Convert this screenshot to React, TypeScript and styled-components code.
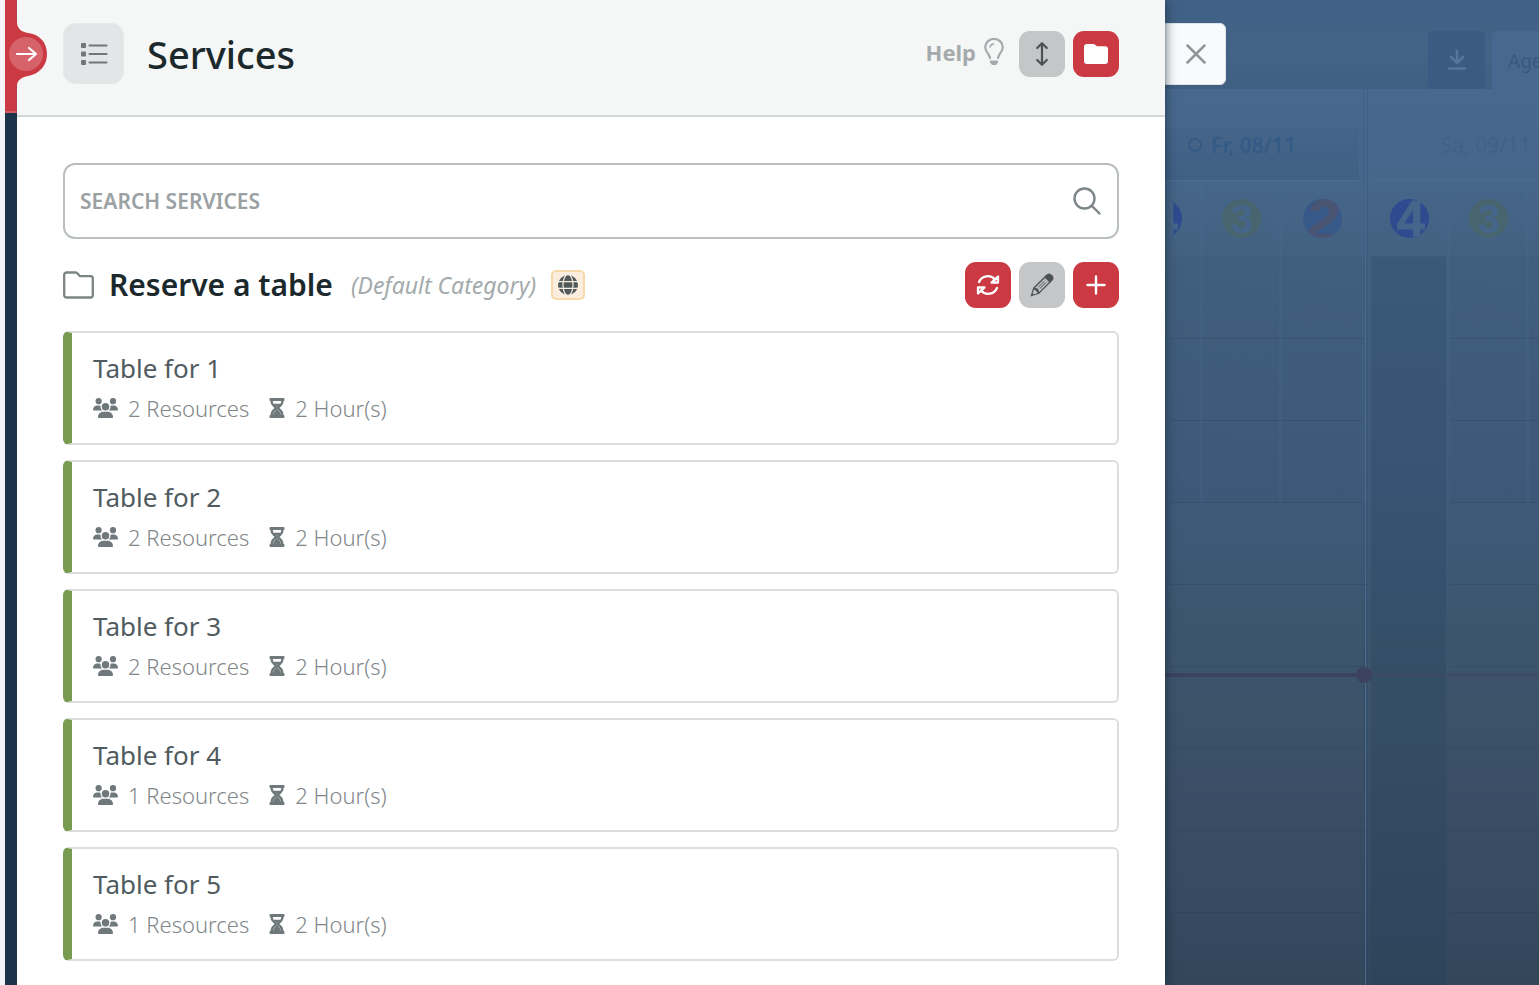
import React from "react";
import styled, { createGlobalStyle, css } from "styled-components";

const GlobalStyle = createGlobalStyle`
  *, *::before, *::after { box-sizing: border-box; }
  body {
    margin: 0;
    background: #f5f5f7;
    font-family: "Noto Sans", "Open Sans", sans-serif;
    color: #1b282c;
  }
  button, input { font: inherit; color: inherit; }
  button { padding: 0; border: 0; cursor: pointer; }
  h1, h2, h3, p, ul { margin: 0; padding: 0; }
  svg { display: block; flex: none; }
`;

/* ---------- Shell ---------- */

const Shell = styled.div`
  display: grid;
  grid-template-columns: 12px minmax(0, 1fr) 374px;
  height: 100vh;
  padding-left: 5px;
  overflow: hidden;
`;

const Rail = styled.nav`
  position: relative;
  z-index: 3;
  display: flex;
  flex-direction: column;
  background: #1d3349;
`;

const RailHead = styled.div`
  height: 113px;
  background: #cb3942;
  border-right: 1px solid #b0434c;
  border-bottom: 2px solid #cf5c65;
`;

const RailToggle = styled.button`
  position: absolute;
  top: 22px;
  left: 0;
  background: none;
`;

const Panel = styled.main`
  position: relative;
  z-index: 2;
  overflow-y: auto;
  background: #fff;
  box-shadow: 1px 0 10px rgba(20, 35, 50, 0.6);
`;

/* ---------- Panel header ---------- */

const PanelHeader = styled.header`
  display: flex;
  align-items: center;
  padding: 23px 46px 31px;
  background: #f5f7f6;
  border-bottom: 2px solid #d3d7d7;
`;

const ListBadge = styled.span`
  display: grid;
  place-items: center;
  width: 61px;
  height: 61px;
  margin-right: 23px;
  border: 1px solid #e8e9eb;
  border-radius: 12px;
  background: #e4e5e7;
`;

const Title = styled.h1`
  flex: 1;
  font-size: 38px;
  font-weight: 500;
  line-height: 60px;
`;

const HelpLink = styled.a`
  display: flex;
  align-items: center;
  gap: 8px;
  margin-right: 15px;
  padding-bottom: 4px;
  color: #a5abad;
  font-size: 22px;
  font-weight: 700;
  line-height: 30px;
  text-decoration: none;
`;

const Actions = styled.div`
  display: flex;
  gap: 8px;
`;

const IconButton = styled.button<{ $tone: "red" | "gray" }>`
  display: grid;
  place-items: center;
  width: 46px;
  height: 46px;
  border-radius: 11px;
  ${({ $tone }) =>
    $tone === "red"
      ? css`background: #cb3942; color: #fff;`
      : css`background: #c4c6c8; color: #4b5254;`}
`;

/* ---------- Panel content ---------- */

const Content = styled.div`
  display: flex;
  flex-direction: column;
  gap: 23px;
  padding: 46px 46px 20px;
`;

const SearchBox = styled.label`
  display: flex;
  align-items: center;
  height: 76px;
  padding: 0 16px 0 15px;
  border: 2px solid #b9bfc1;
  border-radius: 12px;
  color: #7d8688;
`;

const SearchInput = styled.input`
  flex: 1;
  min-width: 0;
  padding: 0;
  border: 0;
  outline: 0;
  background: none;
  font-size: 21px;
  font-weight: 600;
  &::placeholder {
    color: #9ba1a3;
    opacity: 1;
    text-transform: uppercase;
  }
`;

const CategoryRow = styled.div`
  display: flex;
  align-items: center;
`;

const CategoryName = styled.h2`
  margin: 0 18px 0 15px;
  font-size: 30px;
  font-weight: 600;
  line-height: 40px;
`;

const CategoryNote = styled.em`
  color: #a3aaac;
  font-size: 23px;
  line-height: 40px;
`;

const PublicBadge = styled.span`
  display: grid;
  place-items: center;
  width: 34px;
  height: 30px;
  margin: 0 auto 0 15px;
  border: 2px solid #f6d9a8;
  border-radius: 5px;
  background: #fbeedf;
  color: #4f595c;
`;

const ServiceList = styled.ul`
  display: flex;
  flex-direction: column;
  gap: 15px;
  list-style: none;
`;

const ServiceCard = styled.li`
  display: flex;
  flex-direction: column;
  gap: 4px;
  height: 114px;
  padding: 17px 21px 0;
  border: 2px solid #dcdede;
  border-left: 9px solid #789b52;
  border-radius: 6px;
`;

const ServiceName = styled.h3`
  color: #505b5f;
  font-size: 26px;
  font-weight: 400;
  line-height: 36px;
`;

const Meta = styled.p`
  display: flex;
  align-items: center;
  color: #7f8789;
  font-size: 22px;
  font-weight: 300;
  line-height: 36px;
`;

const MetaItem = styled.span`
  display: flex;
  align-items: center;
  gap: 10px;
  margin-right: 20px;
`;

/* ---------- Calendar behind the panel ---------- */

const Calendar = styled.aside`
  position: relative;
  display: flex;
  flex-direction: column;
  overflow: hidden;
  background: linear-gradient(
    #48698f 90px, #46668a 180px, #42607f 270px, #3f5b7b 480px,
    #3c566f 620px, #3c5269 720px, #384c64 850px, #33475b 100%
  );
`;

const CloseButton = styled.button`
  position: absolute;
  top: 23px;
  left: 0;
  z-index: 1;
  display: grid;
  place-items: center;
  width: 61px;
  height: 62px;
  border: 1px solid #dde4ec;
  border-radius: 0 6px 6px 0;
  background: #f9fafc;
  color: #909699;
`;

const ViewBar = styled.div`
  display: flex;
  flex: none;
  justify-content: flex-end;
  align-items: flex-end;
  gap: 7px;
  height: 89px;
  overflow: hidden;
  background: linear-gradient(#406186, #436486 60%, #3f5f83);
`;

const DownloadTab = styled.button`
  display: grid;
  place-items: center;
  width: 57px;
  height: 58px;
  border-radius: 6px 6px 0 0;
  background: #3a5b82;
  color: #56769a;
`;

const ViewTab = styled.button`
  width: 47px;
  height: 58px;
  padding: 2px 0 0 16px;
  overflow: hidden;
  border-radius: 6px 0 0 0;
  background: #48698f;
  color: #38587d;
  font-size: 19px;
  text-align: left;
`;

const Days = styled.div`
  display: grid;
  flex: 1;
  grid-template-columns: 240px 242px;
  min-height: 0;
  margin-left: -40px;
`;

const Day = styled.section`
  display: flex;
  flex-direction: column;
  min-width: 0;
  & + & {
    padding-left: 5px;
    border-left: 1px solid #4b6b8e;
    box-shadow: -2px 0 0 rgba(30, 60, 95, 0.12), inset 2px 0 0 rgba(30, 60, 95, 0.12);
  }
`;

const DayTitle = styled.h2<{ $today?: boolean }>`
  display: flex;
  flex: none;
  align-items: center;
  justify-content: center;
  gap: 9px;
  height: 92px;
  margin-right: 6px;
  padding-top: 20px;
  border-bottom: 1px solid rgba(90, 125, 160, 0.3);
  color: ${({ $today }) => ($today ? "#345b86" : "#40618a")};
  font-size: 21px;
  font-weight: ${({ $today }) => ($today ? 600 : 400)};
  line-height: 28px;
  white-space: nowrap;
  ${({ $today }) =>
    $today &&
    css`background: linear-gradient(transparent 38px, rgba(40, 70, 105, 0.08) 38px, rgba(40, 70, 105, 0.2));`}
`;

const TodayDot = styled.span`
  width: 14px;
  height: 14px;
  border: 2px solid #345b86;
  border-radius: 50%;
`;

const Columns = styled.div<{ $widths: string; $clipped?: boolean }>`
  display: grid;
  flex: 1;
  grid-template-columns: ${({ $widths }) => $widths};
  ${({ $clipped }) => $clipped && css`clip-path: inset(0 0 0 46px);`}
`;

const Column = styled.div`
  min-width: 0;
`;

const columnEdge = css`
  border-right: 3px solid rgba(75, 107, 145, 0.25);
`;

const Resource = styled.div`
  display: flex;
  align-items: center;
  justify-content: center;
  height: 76px;
  ${columnEdge}
  border-bottom: 1px solid rgba(40, 65, 95, 0.15);
`;

const Slots = styled.div<{ $busy?: boolean }>`
  margin-right: ${({ $busy }) => ($busy ? "4px" : "0")};
  background: ${({ $busy }) => ($busy ? "rgba(32, 60, 90, 0.22)" : "none")};
`;

const Slot = styled.div<{ $closed?: boolean; $busy?: boolean }>`
  height: 82px;
  border-bottom: 1px solid ${({ $busy }) => ($busy ? "transparent" : "rgba(30, 50, 75, 0.2)")};
  ${({ $closed }) =>
    $closed &&
    css`
      ${columnEdge}
      background: repeating-linear-gradient(45deg, rgba(30, 55, 80, 0.05) 0 6px, rgba(30, 55, 80, 0.08) 6px 7px);
    `}
`;

const NowLine = styled.div`
  position: absolute;
  top: 673px;
  left: 0;
  width: 100%;
  height: 4px;
  background: linear-gradient(90deg, #3c4260 200px, rgba(64, 66, 100, 0.35) 200px);
`;

const NowDot = styled.span`
  position: absolute;
  top: -6px;
  left: 191px;
  width: 16px;
  height: 16px;
  border-radius: 50%;
  background: #3c4260;
`;

/* ---------- Icons ---------- */

const RailBump = () => (
  <svg width="42" height="64" viewBox="0 0 42 64">
    <path fill="#cb3942" d="M0 0H12C12 7 17 10 23 11C34 12 42 20 42 32C42 44 34 52 23 54C17 55 12 58 12 64H0Z" />
    <circle cx="21" cy="32" r="17" fill="#d6626a" />
    <path d="M12 32H31M24 26L31 32L24 38" fill="none" stroke="#fff" strokeWidth="2.2" strokeLinecap="round" strokeLinejoin="round" />
  </svg>
);

const ListIcon = () => (
  <svg width="28" height="24" viewBox="0 0 28 24" fill="#6f7779">
    {[1, 9.5, 18].map((y) => (
      <React.Fragment key={y}>
        <rect x="1" y={y} width="5" height="5" rx="1" />
        <rect x="8.5" y={y + 1.5} width="19" height="2" rx="1" />
      </React.Fragment>
    ))}
  </svg>
);

const BulbIcon = () => (
  <svg width="20" height="28" viewBox="0 0 20 28" fill="none" stroke="#a5abad" strokeWidth="2.2" strokeLinecap="round">
    <path d="M6 20C5.5 16 1.2 14 1.2 9A8.8 8 0 0 1 18.8 9C18.8 14 14.5 16 14 20" />
    <path d="M6 9A4 4 0 0 1 9.5 6" strokeWidth="1.6" />
    <path d="M6 22.5H14V24.5L12 27H8L6 24.5Z" fill="#a5abad" stroke="none" />
  </svg>
);

const SortIcon = () => (
  <svg width="14" height="26" viewBox="0 0 14 26" fill="none" stroke="currentColor" strokeWidth="2.2" strokeLinecap="round" strokeLinejoin="round">
    <path d="M7 2.5V23.5M2.2 7L7 2.2L11.8 7M2.2 19L7 23.8L11.8 19" />
  </svg>
);

const FolderSolid = () => (
  <svg width="24" height="22" viewBox="0 0 24 22">
    <path fill="#fff" d="M3 1H9C10 1 11 1.4 11.7 2.2L13 3.3H21A3 3 0 0 1 24 6.3V18A3 3 0 0 1 21 21H3A3 3 0 0 1 0 18V4A3 3 0 0 1 3 1Z" />
  </svg>
);

const FolderOutline = () => (
  <svg width="31" height="28" viewBox="0 0 31 28">
    <path fill="none" stroke="#7d8486" strokeWidth="2.3" strokeLinejoin="round" d="M3.700 1.500H12.500Q13.500 1.500 14.300 2.300L17 5.200H27.500Q29.800 5.200 29.800 7.500V24Q29.800 26.500 27.500 26.500H3.700Q1.200 26.500 1.200 24V4Q1.200 1.500 3.700 1.500Z" />
  </svg>
);

const SearchIcon = () => (
  <svg width="28" height="28" viewBox="0 0 28 28" fill="none" stroke="#7d8688" strokeWidth="2.4" strokeLinecap="round">
    <circle cx="11.5" cy="11.5" r="10" />
    <path d="M18.8 18.8L26.5 26.5" />
  </svg>
);

const GlobeIcon = () => (
  <svg width="20" height="20" viewBox="0 0 20 20">
    <circle cx="10" cy="10" r="10" fill="currentColor" />
    <g fill="none" stroke="#fbeedf" strokeWidth="1.2">
      <path d="M0 6.6H20M0 13.4H20" />
      <ellipse cx="10" cy="10" rx="5" ry="10.5" />
    </g>
  </svg>
);

const RefreshIcon = () => (
  <svg width="24" height="22" viewBox="0 0 24 22" fill="none" stroke="#fff" strokeWidth="2.3" strokeLinecap="round" strokeLinejoin="round">
    <path d="M3 8A9.5 9.5 0 0 1 19 5.500M21 14A9.5 9.5 0 0 1 5 16.500" />
    <path d="M22 2.500V8.500H15.500ZM2 19.500V13.500H8.500Z" />
  </svg>
);

const PencilIcon = () => (
  <svg width="24" height="24" viewBox="0 0 24 24">
    <path fill="currentColor" d="M0.5 23.5L3.2 14.8L16 2Q19-1 22 2Q25 5 22 8L9.2 20.8Z" />
    <path fill="#c4c6c8" d="M2.6 20L4.3 16.2L7.8 19.7L4 21.4Z" />
    <path fill="none" stroke="#c4c6c8" strokeWidth="1.5" d="M14.5 5.5L18.5 9.5M6.5 14.5L13.8 7.2L16.8 10.2L9.5 17.5L8.8 15.2Z" />
    <path stroke="#c4c6c8" strokeWidth="1.2" d="M9 15L14.5 9.5" />
  </svg>
);

const PlusIcon = () => (
  <svg width="20" height="20" viewBox="0 0 20 20" stroke="#fff" strokeWidth="2.4" strokeLinecap="round">
    <path d="M10 1.5V18.5M1.5 10H18.5" />
  </svg>
);

const CloseIcon = () => (
  <svg width="20" height="20" viewBox="0 0 20 20" stroke="currentColor" strokeWidth="2.5" strokeLinecap="round">
    <path d="M1.5 1.5L18.5 18.5M18.5 1.5L1.5 18.5" />
  </svg>
);

const PeopleIcon = () => (
  <svg width="25" height="20" viewBox="0 0 640 512" fill="#6f787a">
    <path d="M144 0a80 80 0 1 1 0 160A80 80 0 1 1 144 0zM512 0a80 80 0 1 1 0 160A80 80 0 1 1 512 0zM0 298.700C0 239.800 47.800 192 106.700 192h42.700c15.900 0 31 3.500 44.600 9.700-1.300 7.200-1.900 14.700-1.900 22.300 0 38.200 16.800 72.500 43.300 96H21.300C9.600 320 0 310.400 0 298.700zM405.300 320h-.7c26.600-23.500 43.300-57.800 43.300-96 0-7.600-.7-15-1.900-22.300 13.600-6.300 28.700-9.700 44.600-9.700h42.700C592.200 192 640 239.800 640 298.700c0 11.800-9.600 21.300-21.300 21.300H405.300zM224 224a96 96 0 1 1 192 0 96 96 0 1 1-192 0zM128 485.300C128 411.700 187.700 352 261.300 352h117.400C452.300 352 512 411.700 512 485.300c0 14.700-11.900 26.700-26.700 26.700H154.700c-14.700 0-26.700-11.900-26.700-26.700z" />
  </svg>
);

const HourglassIcon = () => (
  <svg width="16" height="20" viewBox="0 0 16 20">
    <g fill="#6f787a">
      <rect x="0.5" width="15" height="3" rx="1" />
      <rect x="0.5" y="17" width="15" height="3" rx="1" />
      <path d="M8 11L4.5 15L4 17.5H12L11.5 15Z" />
    </g>
    <path fill="none" stroke="#6f787a" strokeWidth="2.4" d="M2.700 2V4Q2.700 6 4.700 7.500L7.500 10L4.700 12.500Q2.700 14 2.700 18M13.300 2V4Q13.300 6 11.300 7.500L8.500 10L11.300 12.500Q13.300 14 13.300 18M4.500 7H11.500" />
  </svg>
);

const DownloadIcon = () => (
  <svg width="20" height="22" viewBox="0 0 20 22" fill="none" stroke="currentColor" strokeWidth="2.6" strokeLinecap="round" strokeLinejoin="round">
    <path d="M10 2V13.5M4 8L10 14L16 8M2 19.5H18" />
  </svg>
);

const ballStyles = {
  "4": { fill: "#2d4b8e", ink: "#45658a", size: 50, x: 21, y: 37 },
  "3": { fill: "#48656f", ink: "#45658a", size: 40, x: 20, y: 34 },
  "2": { fill: "#36598a", ink: "#4a5473", size: 60, x: 19, y: 42 },
} as const;

const Ball = ({ n, id }: { n: keyof typeof ballStyles; id: string }) => {
  const s = ballStyles[n];
  return (
    <svg width="39" height="39" viewBox="0 0 39 39">
      <clipPath id={id}>
        <circle cx="19.5" cy="19.5" r="19.5" />
      </clipPath>
      <g clipPath={`url(#${id})`}>
        <rect width="39" height="39" fill={s.fill} />
        <text
          x={s.x}
          y={s.y}
          fill={s.ink}
          stroke={n === "3" ? "none" : s.ink}
          fontFamily="Liberation Sans, sans-serif"
          fontSize={s.size}
          fontWeight="700"
          fontStyle={n === "2" ? "italic" : "normal"}
          textAnchor="middle"
        >
          {n}
        </text>
      </g>
    </svg>
  );
};

/* ---------- Data ---------- */

const services = [
  { name: "Table for 1", resources: 2, hours: 2 },
  { name: "Table for 2", resources: 2, hours: 2 },
  { name: "Table for 3", resources: 2, hours: 2 },
  { name: "Table for 4", resources: 1, hours: 2 },
  { name: "Table for 5", resources: 1, hours: 2 },
];

const slots = [0, 1, 2, 3, 4, 5, 6, 7, 8];

const ResourceColumn = ({ n, id, busy }: { n?: keyof typeof ballStyles; id: string; busy?: boolean }) => (
  <Column>
    <Resource>{n && <Ball n={n} id={id} />}</Resource>
    <Slots $busy={busy}>
      {slots.map((s) => (
        <Slot key={s} $closed={s < 3 && !busy} $busy={busy} />
      ))}
    </Slots>
  </Column>
);

export default function App() {
  return (
    <>
      <GlobalStyle />
      <Shell>
        <Rail aria-label="Main">
          <RailHead />
          <RailToggle type="button" aria-label="Expand menu">
            <RailBump />
          </RailToggle>
        </Rail>

        <Panel>
          <PanelHeader>
            <ListBadge><ListIcon /></ListBadge>
            <Title>Services</Title>
            <HelpLink href="#help">Help <BulbIcon /></HelpLink>
            <Actions>
              <IconButton type="button" $tone="gray" aria-label="Sort"><SortIcon /></IconButton>
              <IconButton type="button" $tone="red" aria-label="Add category"><FolderSolid /></IconButton>
            </Actions>
          </PanelHeader>

          <Content>
            <SearchBox>
              <SearchInput type="text" placeholder="Search services" aria-label="Search services" />
              <SearchIcon />
            </SearchBox>

            <CategoryRow>
              <FolderOutline />
              <CategoryName>Reserve a table</CategoryName>
              <CategoryNote>(Default Category)</CategoryNote>
              <PublicBadge><GlobeIcon /></PublicBadge>
              <Actions>
                <IconButton type="button" $tone="red" aria-label="Refresh"><RefreshIcon /></IconButton>
                <IconButton type="button" $tone="gray" aria-label="Edit"><PencilIcon /></IconButton>
                <IconButton type="button" $tone="red" aria-label="Add service"><PlusIcon /></IconButton>
              </Actions>
            </CategoryRow>

            <ServiceList>
              {services.map((s) => (
                <ServiceCard key={s.name}>
                  <ServiceName>{s.name}</ServiceName>
                  <Meta>
                    <MetaItem><PeopleIcon />{s.resources} Resources</MetaItem>
                    <MetaItem><HourglassIcon />{s.hours} Hour(s)</MetaItem>
                  </Meta>
                </ServiceCard>
              ))}
            </ServiceList>
          </Content>
        </Panel>

        <Calendar>
          <CloseButton type="button" aria-label="Close"><CloseIcon /></CloseButton>
          <ViewBar>
            <DownloadTab type="button" aria-label="Download"><DownloadIcon /></DownloadTab>
            <ViewTab type="button">Agenda</ViewTab>
          </ViewBar>
          <Days>
            <Day>
              <DayTitle $today><TodayDot />Fr, 08/11</DayTitle>
              <Columns $widths="78px 79px 1fr" $clipped>
                <ResourceColumn n="4" id="fr-4" />
                <ResourceColumn n="3" id="fr-3" />
                <ResourceColumn n="2" id="fr-2" />
              </Columns>
            </Day>
            <Day>
              <DayTitle>Sa, 09/11</DayTitle>
              <Columns $widths="79px 79px 1fr">
                <ResourceColumn n="4" id="sa-4" busy />
                <ResourceColumn n="3" id="sa-3" />
                <ResourceColumn id="sa-2" />
              </Columns>
            </Day>
          </Days>
          <NowLine><NowDot /></NowLine>
        </Calendar>
      </Shell>
    </>
  );
}
